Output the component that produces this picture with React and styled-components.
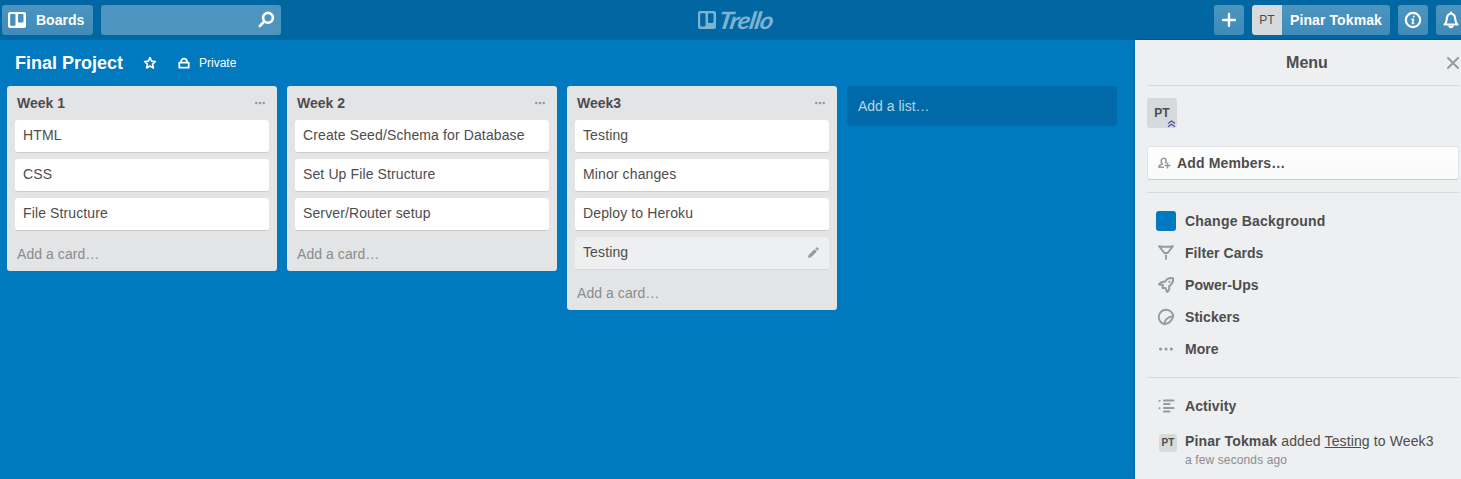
import React from "react";
import styled, { createGlobalStyle } from "styled-components";

const Global = createGlobalStyle`
  * { box-sizing: border-box; }
  body {
    margin: 0;
    background: #0079bf;
    color: #4d4d4d;
    font: 14px/18px "Liberation Sans", Arial, sans-serif;
    overflow: hidden;
  }
`;

const Page = styled.div`
  width: 1461px;
  height: 479px;
  overflow: hidden;
  display: flex;
  flex-direction: column;
`;

const Header = styled.header`
  height: 40px;
  flex: none;
  background: #0067a3;
  display: grid;
  grid-template-columns: 696px 1fr 247px;
  align-items: center;
`;

const HeaderGroup = styled.div`
  display: flex;
  align-items: center;
  gap: 8px;
  padding-left: ${(p) => p.$left || 0}px;
`;

const HeaderButton = styled.div`
  height: 30px;
  width: ${(p) => p.$w}px;
  flex: none;
  border-radius: 3px;
  background: linear-gradient(to bottom, #4d95bf, #3f8aba);
  color: #fff;
  display: flex;
  align-items: center;
  justify-content: ${(p) => p.$justify || "center"};
  padding: 0 ${(p) => p.$pad || 0}px;
  overflow: hidden;
`;

const SearchBox = styled(HeaderButton)`
  background: #4d95bf;
`;

const HeaderText = styled.span`
  font-weight: 700;
  letter-spacing: ${(p) => p.$ls || 0}px;
  margin-left: ${(p) => p.$ml || 0}px;
  white-space: nowrap;
`;

const Logo = styled.div`
  display: flex;
  align-items: center;
  padding-left: 2px;
  color: #7fb2d1;
`;

const Wordmark = styled.span`
  font: italic 700 24px/28px Lato, "Liberation Sans", sans-serif;
  letter-spacing: -0.9px;
  margin-left: 3px;
  transform: skewX(-10deg) scaleX(1.08);
  transform-origin: 0 50%;
`;

const Initials = styled.span`
  width: ${(p) => p.$size}px;
  height: ${(p) => p.$size}px;
  flex: none;
  display: flex;
  align-items: center;
  justify-content: center;
  position: relative;
  background: #d6dadc;
  color: #4d4d4d;
  border-radius: ${(p) => p.$radius || "3px"};
  font-size: ${(p) => p.$font}px;
  font-weight: ${(p) => p.$weight || 400};
`;

const AdminBadge = styled.svg`
  position: absolute;
  right: 1px;
  bottom: 0;
`;

const Main = styled.div`
  flex: 1;
  min-height: 0;
  display: flex;
`;

const Board = styled.main`
  width: 1135px;
  flex: none;
  background: #0079bf;
`;

const BoardBar = styled.div`
  height: 46px;
  display: flex;
  align-items: center;
  padding-left: 15px;
  color: #fff;
`;

const BoardTitle = styled.h1`
  margin: 0 20px 0 0;
  font-size: 18px;
  line-height: 24px;
  width: 108px;
  white-space: nowrap;
`;

const Visibility = styled.span`
  display: flex;
  align-items: center;
  gap: 9px;
  margin-left: 21px;
  font-size: 12px;
`;

const Lists = styled.div`
  display: flex;
  align-items: flex-start;
  gap: 10px;
  padding-left: 7px;
`;

const List = styled.section`
  width: 270px;
  background: #e2e4e6;
  border-radius: 3px;
`;

const ListHead = styled.div`
  height: 34px;
  display: flex;
  align-items: center;
  justify-content: space-between;
  padding: 0 12px 0 10px;
  font-weight: 700;
`;

const Cards = styled.div`
  display: flex;
  flex-direction: column;
  gap: 6px;
  padding: 0 8px;
`;

const CardBox = styled.div`
  height: 33px;
  display: flex;
  align-items: center;
  justify-content: space-between;
  padding: 0 10px 2px 8px;
  border-radius: 3px;
  border-bottom: 1px solid ${(p) => (p.$active ? "#d6dadc" : "#cccccc")};
  background: ${(p) => (p.$active ? "#edeff0" : "#fff")};
  letter-spacing: 0.12px;
`;

const AddCard = styled.div`
  height: 40px;
  padding: 14px 10px 0;
  color: #8c8c8c;
  letter-spacing: 0.06px;
`;

const AddList = styled.div`
  width: 270px;
  height: 40px;
  display: flex;
  align-items: center;
  padding-left: 11px;
  border-radius: 3px;
  background: #006aa8;
  color: #b8d5e6;
`;

const Menu = styled.aside`
  flex: 1;
  min-width: 0;
  background: #edeff0;
  padding: 0 2px 0 12px;
  box-shadow: 0 0 2px rgba(0, 0, 0, 0.35);
`;

const MenuHead = styled.div`
  height: 46px;
  display: grid;
  grid-template-columns: 20px 1fr 12px;
  align-items: center;
  text-align: center;
  font-size: 16px;
  font-weight: 700;
  border-bottom: 1px solid #d6dadc;
`;

const CloseButton = styled.span`
  display: flex;
  color: #999;
`;

const Members = styled.div`
  padding: 12px 0 18px;
`;

const AddMembers = styled.div`
  height: 34px;
  display: flex;
  align-items: center;
  gap: 6px;
  padding-left: 10px;
  border: 1px solid #e2e4e6;
  border-bottom-color: #c9cccd;
  border-radius: 3px;
  background: linear-gradient(to bottom, #fff, #f8f9f9);
  font-weight: 700;
  letter-spacing: 0.15px;
`;

const MenuItems = styled.div`
  margin-top: ${(p) => p.$top || 0}px;
  padding: 12px 0;
  border-top: 1px solid #d6dadc;
`;

const MenuItem = styled.div`
  height: 32px;
  display: flex;
  align-items: center;
  gap: 8px;
  padding-left: 8px;
  font-weight: 700;
  letter-spacing: ${(p) => p.$ls ?? 0.05}px;
`;

const IconSlot = styled.span`
  width: 22px;
  display: flex;
  justify-content: center;
  color: #999;
`;

const Swatch = styled.span`
  width: 20px;
  height: 20px;
  border-radius: 3px;
  background: #0079bf;
`;

const Entry = styled.div`
  display: flex;
  gap: 8px;
  padding: 12px 0 0 12px;
`;

const EntryText = styled.div`
  white-space: nowrap;
  margin-top: -2px;
  letter-spacing: 0.12px;
`;

const CardLink = styled.span`
  text-decoration: underline;
`;

const Time = styled.div`
  font-size: 12px;
  line-height: 18px;
  margin-top: 1px;
  color: #8c8c8c;
`;

const Icon = ({ w = 18, h = w, sw = 1.8, children }) => (
  <svg width={w} height={h} viewBox={`0 0 ${w} ${h}`} fill="none" stroke="currentColor" strokeWidth={sw} strokeLinecap="round" strokeLinejoin="round">
    {children}
  </svg>
);

const BoardIcon = ({ w, h }) => (
  <svg width={w} height={h} viewBox="0 0 18 16" preserveAspectRatio="none">
    <path fill="currentColor" fillRule="evenodd" d="M2 0H16Q18 0 18 2V14Q18 16 16 16H2Q0 16 0 14V2Q0 0 2 0ZM3 2Q2.200 2 2.200 3V12.700Q2.200 13.700 3 13.700H6.600Q7.500 13.700 7.500 12.700V3Q7.500 2 6.600 2ZM11 2Q10 2 10 3V9.600Q10 10.600 11 10.600H14.500Q15.500 10.600 15.500 9.600V3Q15.500 2 14.500 2Z" />
  </svg>
);

const Dots = ({ w = 10, r = 1.3 }) => (
  <svg width={w} height="4" viewBox={`0 0 ${w} 4`} fill="#999">
    <circle cx={r} cy="2" r={r} />
    <circle cx={w / 2} cy="2" r={r} />
    <circle cx={w - r} cy="2" r={r} />
  </svg>
);

const lists = [
  { title: "Week 1", cards: ["HTML", "CSS", "File Structure"] },
  { title: "Week 2", cards: ["Create Seed/Schema for Database", "Set Up File Structure", "Server/Router setup"] },
  { title: "Week3", cards: ["Testing", "Minor changes", "Deploy to Heroku", "Testing"], active: 3 },
];

const menuItems = [
  { label: "Change Background", ls: 0.22, icon: <Swatch /> },
  {
    label: "Filter Cards",
    icon: <Icon w={18} sw={1.9}><path d="M2 2.200Q9 3.400 16 2.200L10.600 9H7.400ZM9 11.500V15" /></Icon>,
  },
  {
    label: "Power-Ups",
    icon: <Icon w={18} sw={2}><path d="M16 2.200C12.500 1.600 10 2.500 8 5.800C5.500 5.300 3.500 6.300 2 8.500L6 9L5.500 12L8.500 12L10 16C12.300 14.500 12.800 12.500 12 10.300C15.500 8 16.500 5.500 16 2.200ZM12.300 5.900L12.500 5.700" /></Icon>,
  },
  {
    label: "Stickers",
    icon: <Icon w={18} sw={1.9}><path d="M7.500 16.200A7.300 7.300 0 1 1 16.300 8C15.500 12 12 15.800 7.500 16.200C7.500 14 8 12.800 9.200 11.300C11 9.300 13 8.300 16.300 8" /></Icon>,
  },
  { label: "More", icon: <Dots w={14} r={1.6} /> },
];

export default function App() {
  return (
    <Page>
      <Global />
      <Header>
        <HeaderGroup $left={2}>
          <HeaderButton $w={91} $pad={6} $justify="flex-start">
            <BoardIcon w={18} h={16} />
            <HeaderText $ml={10}>Boards</HeaderText>
          </HeaderButton>
          <SearchBox $w={180} $pad={6} $justify="flex-end">
            <Icon w={18} sw={2.6}><circle cx="11" cy="6.800" r="4.900" /><path d="M7.300 10.500L2.800 15" /></Icon>
          </SearchBox>
        </HeaderGroup>
        <Logo>
          <BoardIcon w={18} h={18} />
          <Wordmark>Trello</Wordmark>
        </Logo>
        <HeaderGroup>
          <HeaderButton $w={30}>
            <Icon w={16} sw={2.3}><path d="M8 2V14M2 8H14" /></Icon>
          </HeaderButton>
          <HeaderButton $w={138} $justify="flex-start">
            <Initials $size={30} $font={12} $radius="3px 0 0 3px">PT</Initials>
            <HeaderText $ml={8} $ls={0.1}>Pinar Tokmak</HeaderText>
          </HeaderButton>
          <HeaderButton $w={30}>
            <Icon w={18} sw={2.2}><circle cx="9" cy="9" r="7.200" /><path d="M9.800 5.400L9.750 5.600M8 8.300H9.300L8.500 12.300H9.500" strokeWidth="1.700" /></Icon>
          </HeaderButton>
          <HeaderButton $w={30}>
            <Icon w={18} sw={2.1}><path d="M2.500 13.500C5 11.500 4.500 9.500 5 6.500C5.500 3.800 7 2.700 9 2.700S12.500 3.800 13 6.500C13.500 9.500 13 11.500 15.500 13.500ZM9 1.500V2.500M7.500 15.500Q9 17 10.500 15.500" /></Icon>
          </HeaderButton>
        </HeaderGroup>
      </Header>
      <Main>
        <Board>
          <BoardBar>
            <BoardTitle>Final Project</BoardTitle>
            <Icon w={14} sw={1.7}><path d="M7 1.700L8.600 5.100L12.400 5.500L9.600 8.100L10.400 11.900L7 10L3.600 11.900L4.400 8.100L1.600 5.500L5.400 5.100Z" /></Icon>
            <Visibility>
              <Icon w={12} sw={1.8}><path d="M1.300 5.600H10.700V10.700H1.300ZM3 5.300C3 0.400 9 0.400 9 5.300" /></Icon>
              Private
            </Visibility>
          </BoardBar>
          <Lists>
            {lists.map((list) => (
              <List key={list.title}>
                <ListHead>{list.title}<Dots /></ListHead>
                <Cards>
                  {list.cards.map((card, i) => (
                    <CardBox key={i} $active={list.active === i}>
                      {card}
                      {list.active === i && (
                        <svg width="11" height="11" viewBox="0 0 11 11" fill="#999">
                          <path d="M0 11L0.700 8L6.500 2.200L8.800 4.500L3 10.300ZM7.300 1.400L8.300 0.400Q9 0 9.700 0.700L10.400 1.400Q11 2 10.500 2.700L9.600 3.700Z" />
                        </svg>
                      )}
                    </CardBox>
                  ))}
                </Cards>
                <AddCard>Add a card…</AddCard>
              </List>
            ))}
            <AddList>Add a list…</AddList>
          </Lists>
        </Board>
        <Menu>
          <MenuHead>
            <span />
            Menu
            <CloseButton><Icon w={12} sw={2}><path d="M1 1L11 11M11 1L1 11" /></Icon></CloseButton>
          </MenuHead>
          <Members>
            <Initials $size={30} $font={12} $weight={700}>
              PT
              <AdminBadge width="9" height="8" viewBox="0 0 9 8" fill="none" stroke="#4b4ba8" strokeWidth="1.200">
                <path d="M1 3.500L4.500 1L8 3.500M1 6.800L4.500 4.300L8 6.800" />
              </AdminBadge>
            </Initials>
          </Members>
          <AddMembers>
            <svg width="13" height="12" viewBox="0 0 13 12" fill="none" stroke="#999" strokeWidth="1.600">
              <path d="M6 10.200H1C1 8.200 2 7.600 4.200 7C2.200 4.500 3.200 1.200 5.600 1.200S9 4 7.200 6.200M9.500 5.500V11.500M6.500 8.500H12.500" />
            </svg>
            Add Members…
          </AddMembers>
          <MenuItems $top={12}>
            {menuItems.map((item) => (
              <MenuItem key={item.label} $ls={item.ls}><IconSlot>{item.icon}</IconSlot>{item.label}</MenuItem>
            ))}
          </MenuItems>
          <MenuItems as="section">
            <MenuItem $ls={0.1}>
              <IconSlot>
                <Icon w={17} h={14} sw={2}><path d="M1.500 1.800H1.600M6 1.500H15.500M6 5H11.500M1.500 9.200H1.600M6 9H15.500M6 12.500H11.500" /></Icon>
              </IconSlot>
              Activity
            </MenuItem>
            <Entry>
              <Initials $size={18} $font={10} $weight={700}>PT</Initials>
              <EntryText>
                <b>Pinar Tokmak</b> added <CardLink>Testing</CardLink> to Week3
                <Time>a few seconds ago</Time>
              </EntryText>
            </Entry>
          </MenuItems>
        </Menu>
      </Main>
    </Page>
  );
}
